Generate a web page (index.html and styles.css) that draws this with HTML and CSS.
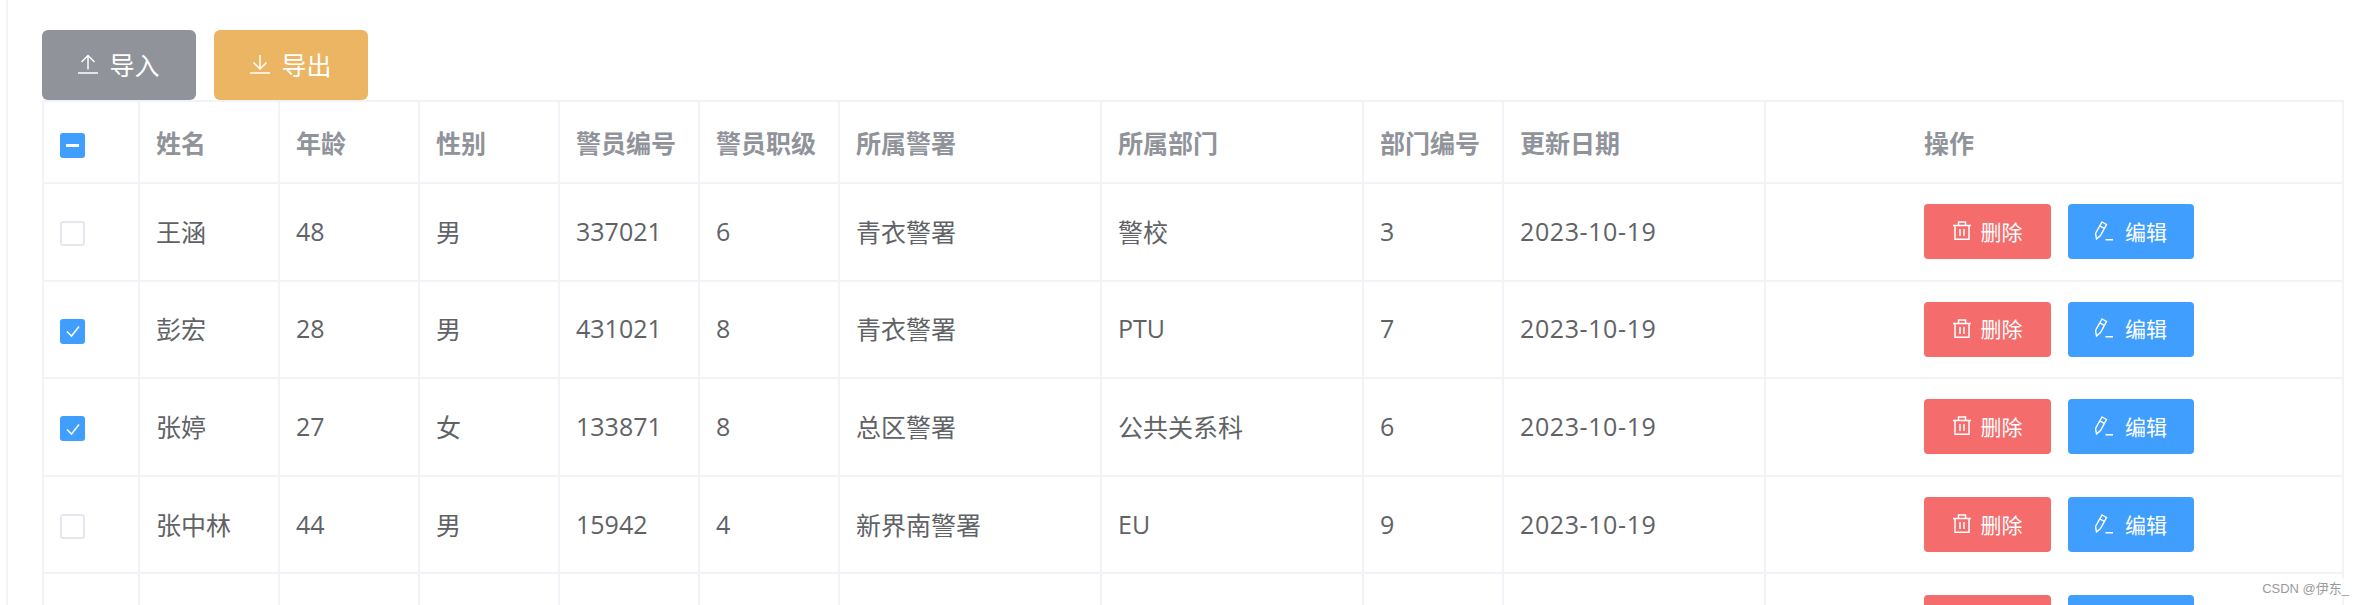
FILE: index.html
```html
<!DOCTYPE html>
<html lang="en">
    <head>
        <meta charset="UTF-8">
        <meta name="viewport" content="width=device-width, initial-scale=1.0">
        <title>警员管理</title>
        <link rel="stylesheet" href="styles.css">
    </head>
    <body>
        <svg class="sprites" width="0" height="0">
            <symbol id="iconUpload" viewBox="0 0 20 20">
                <path d="M0 18.900h20M10 15.500V1.500M3.500 8l6.500-6.500L16.500 8" fill="none" stroke="currentColor" stroke-width="1.500"/>
            </symbol>
            <symbol id="iconDownload" viewBox="0 0 20 20">
                <path d="M0 18.900h20M10 1v14M3.500 8.500L10 15l6.500-6.500" fill="none" stroke="currentColor" stroke-width="1.500"/>
            </symbol>
            <symbol id="iconDelete" viewBox="0 0 18 19">
                <path d="M0 4.500h18M5.500 4.500V1h7v3.500M2 4.500V18.200h14V4.500M7 8v7M11 8v7" fill="none" stroke="currentColor" stroke-width="1.500"/>
            </symbol>
            <symbol id="iconEdit" viewBox="0 0 20 20">
                <path d="M7 1l4.500 2.500-6 11-4 3.500-1-5.500zM4.800 4.800l4.500 2.500M10.500 18.700H18" fill="none" stroke="currentColor" stroke-width="1.400"/>
            </symbol>
        </svg>
        <div class="page">
            <div class="toolbar">
                <button class="bigButton buttonImport"><svg class="bigIcon"><use href="#iconUpload"/></svg>导入</button>
                <button class="bigButton buttonExport"><svg class="bigIcon"><use href="#iconDownload"/></svg>导出</button>
            </div>
            <table class="grid">
                <colgroup>
                    <col class="colCheck">
                    <col class="colSmall">
                    <col class="colSmall">
                    <col class="colSmall">
                    <col class="colSmall">
                    <col class="colSmall">
                    <col class="colWide">
                    <col class="colWide">
                    <col class="colSmall">
                    <col class="colWide">
                    <col class="colAction">
                </colgroup>
                <thead>
                    <tr>
                        <th><span class="check checkOn"><span class="dash"></span></span></th>
                        <th>姓名</th>
                        <th>年龄</th>
                        <th>性别</th>
                        <th>警员编号</th>
                        <th>警员职级</th>
                        <th>所属警署</th>
                        <th>所属部门</th>
                        <th>部门编号</th>
                        <th>更新日期</th>
                        <th class="actionCell">操作</th>
                    </tr>
                </thead>
                <tbody>
                    <tr>
                        <td><span class="check"></span></td>
                        <td>王涵</td>
                        <td>48</td>
                        <td>男</td>
                        <td>337021</td>
                        <td>6</td>
                        <td>青衣警署</td>
                        <td>警校</td>
                        <td>3</td>
                        <td class="date">2023-10-19</td>
                        <td class="actionCell">
                            <div class="actions">
                                <button class="smallButton buttonDelete"><svg class="trashIcon"><use href="#iconDelete"/></svg>删除</button>
                                <button class="smallButton buttonEdit"><svg class="penIcon"><use href="#iconEdit"/></svg>编辑</button>
                            </div>
                        </td>
                    </tr>
                    <tr>
                        <td><span class="check checkOn"><svg class="tick" viewBox="0 0 24 24"><path d="M6 12.500l4.500 4.500L18 7.500" fill="none" stroke="#fff" stroke-width="1.500"/></svg></span></td>
                        <td>彭宏</td>
                        <td>28</td>
                        <td>男</td>
                        <td>431021</td>
                        <td>8</td>
                        <td>青衣警署</td>
                        <td>PTU</td>
                        <td>7</td>
                        <td class="date">2023-10-19</td>
                        <td class="actionCell">
                            <div class="actions">
                                <button class="smallButton buttonDelete"><svg class="trashIcon"><use href="#iconDelete"/></svg>删除</button>
                                <button class="smallButton buttonEdit"><svg class="penIcon"><use href="#iconEdit"/></svg>编辑</button>
                            </div>
                        </td>
                    </tr>
                    <tr>
                        <td><span class="check checkOn"><svg class="tick" viewBox="0 0 24 24"><path d="M6 12.500l4.500 4.500L18 7.500" fill="none" stroke="#fff" stroke-width="1.500"/></svg></span></td>
                        <td>张婷</td>
                        <td>27</td>
                        <td>女</td>
                        <td>133871</td>
                        <td>8</td>
                        <td>总区警署</td>
                        <td>公共关系科</td>
                        <td>6</td>
                        <td class="date">2023-10-19</td>
                        <td class="actionCell">
                            <div class="actions">
                                <button class="smallButton buttonDelete"><svg class="trashIcon"><use href="#iconDelete"/></svg>删除</button>
                                <button class="smallButton buttonEdit"><svg class="penIcon"><use href="#iconEdit"/></svg>编辑</button>
                            </div>
                        </td>
                    </tr>
                    <tr>
                        <td><span class="check"></span></td>
                        <td>张中林</td>
                        <td>44</td>
                        <td>男</td>
                        <td>15942</td>
                        <td>4</td>
                        <td>新界南警署</td>
                        <td>EU</td>
                        <td>9</td>
                        <td class="date">2023-10-19</td>
                        <td class="actionCell">
                            <div class="actions">
                                <button class="smallButton buttonDelete"><svg class="trashIcon"><use href="#iconDelete"/></svg>删除</button>
                                <button class="smallButton buttonEdit"><svg class="penIcon"><use href="#iconEdit"/></svg>编辑</button>
                            </div>
                        </td>
                    </tr>
                    <tr>
                        <td></td>
                        <td></td>
                        <td></td>
                        <td></td>
                        <td></td>
                        <td></td>
                        <td></td>
                        <td></td>
                        <td></td>
                        <td></td>
                        <td class="actionCell">
                            <div class="actions">
                                <button class="smallButton buttonDelete"></button>
                                <button class="smallButton buttonEdit"></button>
                            </div>
                        </td>
                    </tr>
                </tbody>
            </table>
        </div>
        <div class="watermark">CSDN @伊东_</div>
    </body>
</html>
```

FILE: styles.css
```css
* {
    box-sizing: border-box;
}
html, body {
    height: 605px;
    overflow: hidden;
}
body {
    margin: 0;
    background-color: #fff;
    font-family: "Open Sans", "Noto Sans CJK SC", sans-serif;
    font-size: 25px;
    color: #606266;
}
.sprites {
    display: block;
    height: 0;
}
.page {
    margin-left: 6px;
    width: 2338px;
    height: 605px;
    padding: 30px 0 0 34px;
    border-left: 2px solid #f1f3f8;
}
.toolbar {
    display: flex;
    gap: 18px;
}
.bigButton {
    display: flex;
    align-items: center;
    justify-content: center;
    gap: 11px;
    width: 154px;
    height: 70px;
    padding: 0 0 3px;
    border: none;
    border-radius: 6px;
    color: #fff;
    font-family: inherit;
    font-size: 25px;
}
.buttonImport {
    background-color: #909399;
}
.buttonExport {
    background-color: #ebb563;
}
.bigIcon {
    width: 20px;
    height: 20px;
}
.grid {
    width: 2302px;
    table-layout: fixed;
    border-collapse: separate;
    border-spacing: 0;
    border-top: 2px solid #f1f3f8;
    border-left: 2px solid #f1f3f8;
}
.colCheck {
    width: 96px;
}
.colSmall {
    width: 140px;
}
.colWide {
    width: 262px;
}
.colAction {
    width: 578px;
}
.grid th, .grid td {
    padding: 0 0 0 16px;
    text-align: left;
    border-right: 2px solid #f1f3f8;
    border-bottom: 2px solid #f1f3f8;
}
.grid th {
    height: 82px;
    color: #909399;
    font-weight: 700;
}
.grid td {
    height: 97.6px;
    padding-bottom: 2px;
}
.grid .date {
    letter-spacing: 0.6px;
}
.grid .actionCell {
    padding-left: 158px;
}
.check {
    display: flex;
    align-items: center;
    justify-content: center;
    width: 25px;
    height: 25px;
    margin-top: 6px;
    border: 2px solid #e4e7ed;
    border-radius: 3px;
    background-color: #fff;
}
.checkOn {
    border: none;
    background-color: #409eff;
}
.dash {
    width: 13px;
    height: 3px;
    background-color: #fff;
}
.tick {
    width: 24px;
    height: 24px;
}
.actions {
    display: flex;
    gap: 17px;
    margin-top: 2px;
}
.smallButton {
    display: flex;
    align-items: center;
    justify-content: center;
    gap: 10px;
    width: 127px;
    height: 55px;
    padding: 0 0 2px;
    border: none;
    border-radius: 4px;
    color: #fff;
    font-family: inherit;
    font-size: 21px;
}
.buttonDelete {
    background-color: #f56c6c;
}
.buttonEdit {
    background-color: #409eff;
    width: 126px;
}
.trashIcon {
    width: 18px;
    height: 19px;
}
.penIcon {
    width: 20px;
    height: 20px;
}
.watermark {
    position: absolute;
    right: 14px;
    top: 578px;
    font-family: "Liberation Sans", "Noto Sans CJK SC", sans-serif;
    font-size: 13px;
    color: #9a9a9a;
    background-color: rgba(255, 255, 255, 0.7);
}
```
